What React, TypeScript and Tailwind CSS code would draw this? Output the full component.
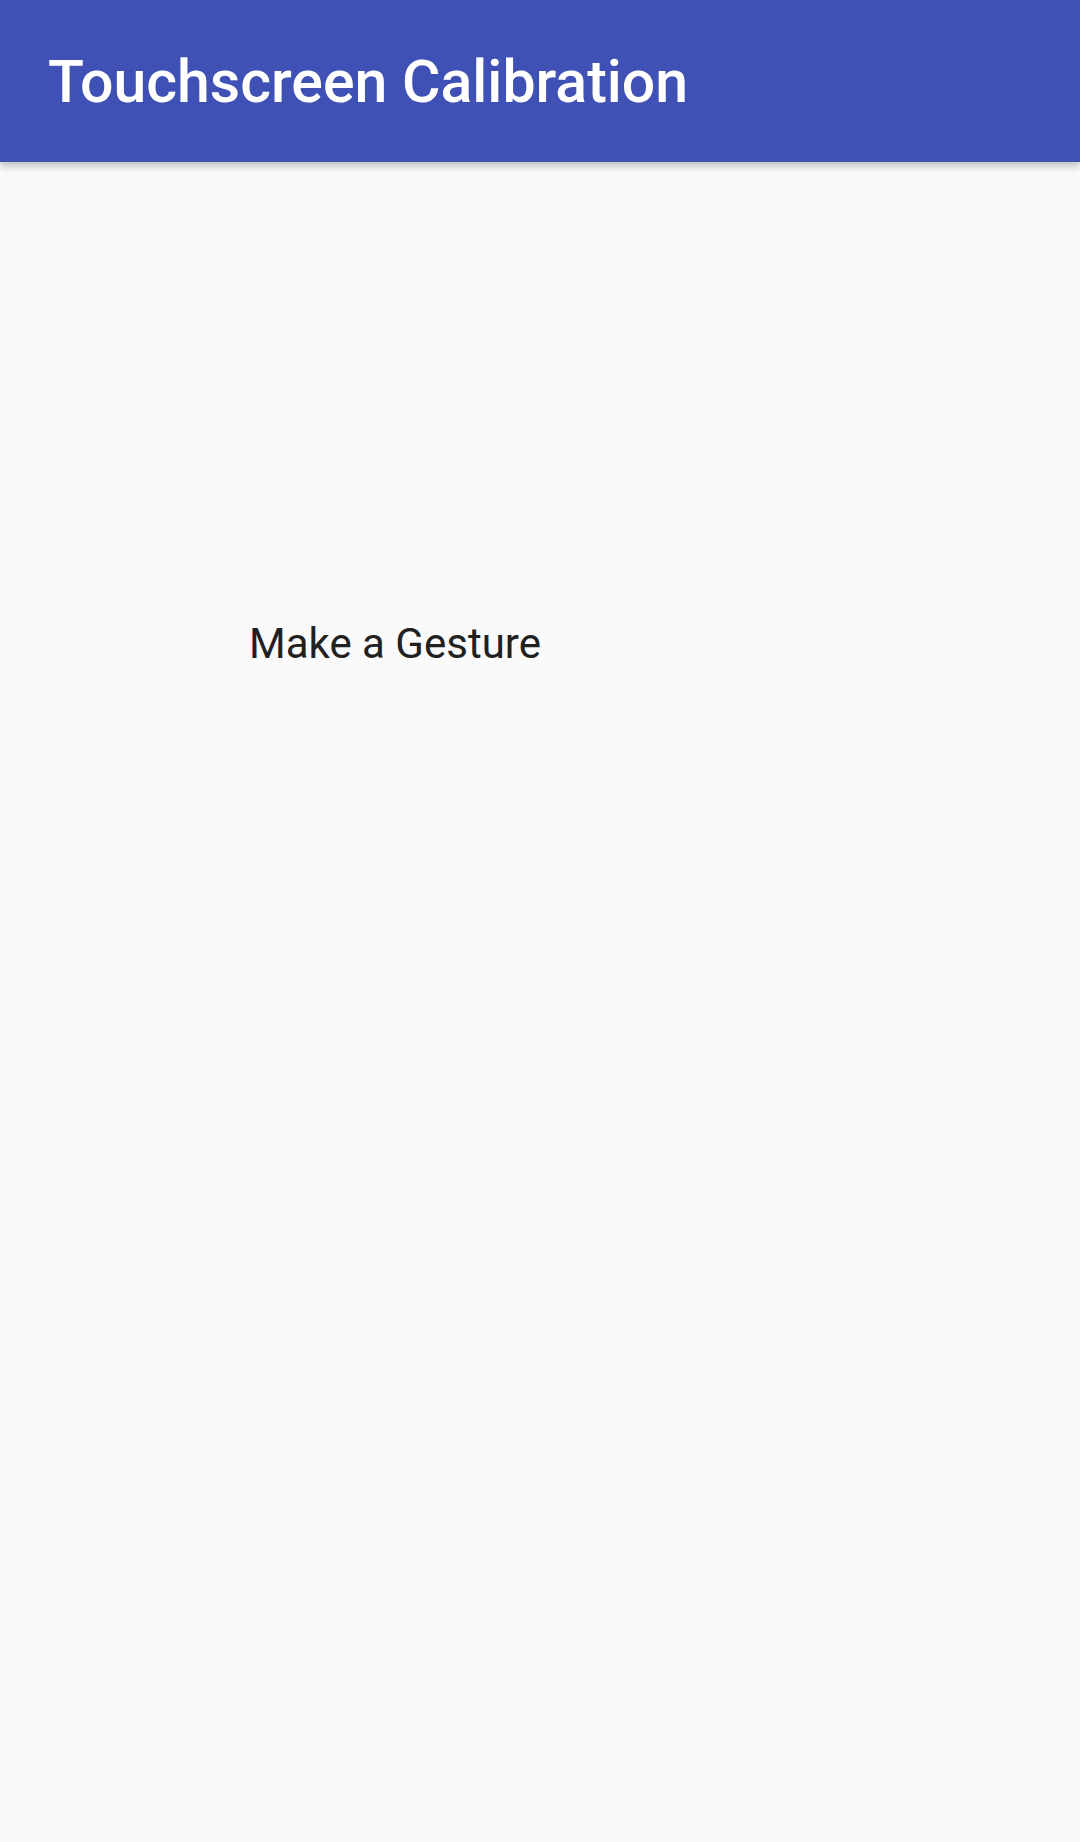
import React from 'react';

const App: React.FC = () => {
  return (
    <div className="min-h-[1842px] w-full bg-[#fafafa] font-['Roboto',sans-serif]">
      {/* Toolbar */}
      <header className="relative z-10 flex h-[162px] items-center bg-[#3f51b5] pl-[48px] shadow-[0_4px_8px_rgba(0,0,0,0.25)]">
        <h1 className="text-[59px] font-medium leading-none text-white">Touchscreen Calibration</h1>
      </header>

      {/* Gesture area */}
      <main className="pl-[249px] pt-[461px]">
        <p className="text-[42px] leading-none text-[#212121]">Make a Gesture</p>
      </main>
    </div>
  );
};

export default App;
